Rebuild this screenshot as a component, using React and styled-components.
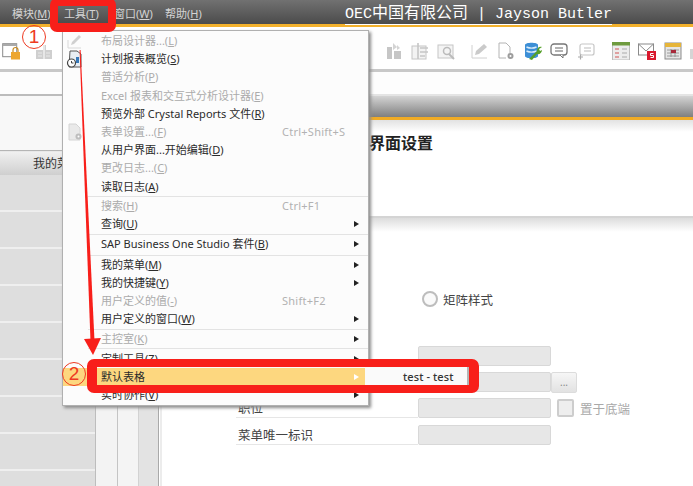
import React from "react";
import styled, { createGlobalStyle } from "styled-components";

const Global = createGlobalStyle`
  html, body { margin: 0; padding: 0; background: #fff; }
  * { box-sizing: border-box; }
`;
const sans = `"Noto Sans", "Noto Sans CJK SC", sans-serif`;

const Page = styled.div`
  position: relative; width: 693px; height: 486px; overflow: hidden; background: #fff;
  font-family: ${sans}; display: flex; flex-direction: column;
`;
const TitleBar = styled.header`
  height: 27px; flex: none; display: flex; align-items: center; gap: 13px;
  padding: 3px 81px 0 12px; border-bottom: 3px solid #f3b12c;
  background: linear-gradient(#717171, #4b4b4b);
`;
const TopMenu = styled.span`
  font-size: 11px; line-height: 14px; color: #d4d4d4; width: ${p => p.$w}px; white-space: nowrap;
  u { text-underline-offset: 1px; }
`;
const Company = styled.div`
  margin-left: auto; font-family: "Liberation Mono", "Noto Sans CJK SC", monospace; font-size: 15px; color: #fff;
  line-height: 19px; white-space: nowrap; border-bottom: 1px solid #fff;
  b { font-weight: 400; font-family: "Noto Sans CJK SC", sans-serif; font-size: 16px; line-height: 19px; }
`;
const Toolbar = styled.div`
  height: 45px; flex: none; display: flex; align-items: center; padding: 5px 0 0 2px;
  border-bottom: 3px solid #c8c8c8; overflow: hidden; background: #fff;
`;
const ToolGroup = styled.div`
  display: flex; flex: none; align-items: center; gap: ${p => p.$gap}px; margin-left: ${p => p.$ml || 0}px;
  svg { display: block; flex: none; }
`;
const SubBar = styled.div` height: 22px; flex: none; background: #fdfdfd; `;
const Work = styled.div` flex: 1; min-height: 0; display: flex; `;
const LeftPane = styled.aside`
  width: 160px; flex: none; display: flex; flex-direction: column; border-top: 2px solid #bcbcbc;
`;
const LeftTop = styled.div` height: 55px; flex: none; background: #f8f8f8; border-bottom: 1px solid #b5b5b5; `;
const Tab = styled.div`
  height: 24px; flex: none; width: 160px; padding: 2px 0 0 33px; font-size: 12px; line-height: 20px; color: #333;
  background: linear-gradient(#f0f0f0, #cfcfcf); border-top: 1px solid #e8e8e8;
`;
const LeftBody = styled.div` flex: 1; display: flex; min-height: 0; `;
const Rows = styled.div` width: 96px; flex: none; background: #dedede; border-right: 1px solid #bdbdbd; `;
const Row = styled.div` height: 37px; border-bottom: 2px solid #efefef; `;
const Col = styled.div`
  width: ${p => p.$w}px; flex: none; background: ${p => p.$bg}; border-right: 1px solid ${p => p.$line};
`;
const RightPane = styled.main` flex: 1; min-width: 0; display: flex; flex-direction: column; border-left: 2px solid #ececec; `;
const Band = styled.div`
  height: 26px; flex: none; background: linear-gradient(#d4d4d4, #7f7f7f); border-top: 2px solid #e4e4e4;
  border-bottom: 3px solid #f0ab25;
`;
const FormTitle = styled.div`
  height: 98px; flex: none; padding: 14px 0 0 207px; font-size: 16px; font-weight: 700; line-height: 18px; color: #222;
  background: linear-gradient(#e2e2e2, #fff 12px); border-bottom: 2px solid #d4d4d4;
`;
const FormBody = styled.div`
  flex: 1; padding-top: 71px; background: linear-gradient(#dcdcdc, #fff 14px);
`;
const RadioLine = styled.div`
  display: flex; align-items: center; gap: 5px; padding-left: 260px; height: 20px;
  font-size: 12.5px; color: #444;
`;
const Radio = styled.span`
  width: 16px; height: 16px; border-radius: 50%; border: 2px solid #bdbdbd; background: #fafafa;
`;
const FormGrid = styled.div`
  display: grid; grid-template-columns: 182px 133px auto; grid-auto-rows: 20px; row-gap: 6.2px;
  margin: 37px 0 0 74px; align-items: stretch;
`;
const Label = styled.div`
  font-size: 12.5px; line-height: 20px; color: #444; padding: 1px 0 0 2px; height: 20px; white-space: nowrap;
  ${p => p.$line && "border-bottom: 1px solid #e6e6e6;"}
`;
const Input = styled.div` background: #e7e7e7; border: 1px solid #d8d8d8; border-radius: 2px; `;
const Addon = styled.div` display: flex; align-items: center; gap: 6px; font-size: 12.5px; color: #a9a9a9; padding-left: ${p => p.$pl || 0}px; `;
const DotButton = styled.div`
  width: 26px; height: 21px; display: flex; align-items: center; justify-content: center; font-size: 10px; color: #888;
  background: linear-gradient(#f6f6f6, #e2e2e2); border: 1px solid #dcdcdc; border-radius: 2px;
`;
const Check = styled.span` width: 17px; height: 18px; background: #eee; border: 2px solid #cdcdcd; border-radius: 2px; `;

const Menu = styled.nav`
  position: absolute; left: 62px; top: 30px; width: 307px; height: 376px; padding-top: 1px;
  background: #fcfcfc; border: 1px solid #b0b0b0; box-shadow: 2px 2px 3px #8c8c8c;
`;
const Item = styled.div`
  position: relative; height: 18.2px; display: grid; grid-template-columns: 181px 1fr 6px; align-items: center;
  padding: 0 8px 0 38px; font-size: 11px; line-height: 18px; white-space: nowrap;
  color: ${p => (p.$off ? "#ababab" : "#2b2b2b")};
  background: ${p => (p.$hot ? "#fdd77f" : "transparent")};
  u { text-underline-offset: 1px; }
`;
const Shortcut = styled.span` color: #b2b2b2; letter-spacing: .25px; `;
const Caret = styled.i`
  grid-column: 3; width: 0; height: 0; border-left: 5px solid ${p => (p.$hot ? "#fff" : "#222")};
  border-top: 3.5px solid transparent; border-bottom: 3.5px solid transparent;
`;
const Sep = styled.div`
  height: 1px; margin: ${p => (p.$wide ? "1.25px" : ".25px")} 0 .25px 25px; background: #e3e3e3;
`;
const MenuIcon = styled.span`
  position: absolute; left: 3px; top: 0; width: 18px; height: 18px;
  svg { display: block; }
`;
const RedFrame = styled.div`
  position: absolute; border-style: solid; border-color: #f81f1a; border-radius: 7px;
  left: ${p => p.$l}px; top: ${p => p.$t}px; width: ${p => p.$w}px; height: ${p => p.$h}px;
  border-width: ${p => p.$bw};
`;
const Sub = styled.div`
  position: absolute; left: 365px; top: 367px; width: 104px; height: 18px; background: #fafafa; border-right: 2px solid #b5b5b5;
  padding-left: 38px; font-size: 11px; line-height: 19px; letter-spacing: .1px; font-weight: 500; color: #333;
`;
const Badge = styled.span`
  position: absolute; left: ${p => p.$l}px; top: ${p => p.$t}px; width: 24px; height: 24px; border-radius: 50%;
  border: 1px solid #ee3a22; color: #ee3a22; font: 400 19px/22px "Liberation Sans", sans-serif; text-align: center;
`;
const Overlay = styled.svg` position: absolute; left: 0; top: 0; pointer-events: none; `;

const Ic = ({ children }) => <svg width="18" height="18" viewBox="0 0 18 18" fill="none">{children}</svg>;
const G = "#c6c6c6";
const LockWin = () => <Ic><rect x=".7" y="1.7" width="14" height="13" stroke="#8a8a8a" fill="#fff" /><rect x="1" y="2" width="13.5" height="2" fill="#aaa" /><rect x="9" y="10" width="9" height="7.5" fill="#eda62f" /><path d="M11 10V8a2.5 2.5 0 015 0v2" stroke="#c98a1e" strokeWidth="1.2" /></Ic>;
const Building = () => <Ic><path d="M1 8h7V3h3v5h6v9H1z" fill="#cfcfcf" /><path d="M9 3v14" stroke="#fff" /><path d="M3 11h4M3 14h4M11 11h4M11 14h4" stroke="#e9e9e9" /></Ic>;
const GrayA = () => <Ic><path d="M2 5h5v12H2zM9 9h7v8H9z" fill={G} /><path d="M8 1l4 4-4 3zM12 3l3 3-3 2z" fill="#d4d4d4" /></Ic>;
const GrayB = () => <Ic><rect x="1" y="4" width="14" height="13" stroke={G} fill="#f3f3f3" /><path d="M7 1v16M9 6h8M9 10h8M9 14h5" stroke={G} strokeWidth="1.6" /></Ic>;
const GrayC = () => <Ic><rect x="1" y="3" width="15" height="13" stroke={G} fill="#f4f4f4" /><circle cx="10" cy="9" r="3.5" stroke="#bbb" strokeWidth="1.5" /><path d="M12 12l5 5" stroke="#bbb" strokeWidth="2" /></Ic>;
const Pencil = () => <Ic><path d="M1 16h15M1 3v13" stroke="#d0d0d0" /><path d="M4 13l1-4 8-7 3 3-8 7z" fill="#cacaca" /></Ic>;
const DocGear = () => <Ic><path d="M2 1h7l4 4v6M2 1v15h7" stroke="#b4b4b4" fill="#fff" /><circle cx="13.5" cy="14" r="3" fill="#9d9d9d" /><circle cx="13.5" cy="14" r="1" fill="#fff" /></Ic>;
const DbWrench = () => <Ic><path d="M1 3c0-3 13-3 13 0v11c0 3-13 3-13 0z" fill="#3d8fd6" /><path d="M2.5 5c3 1.4 7 1.4 10 0M2.5 9c3 1.4 7 1.4 10 0" stroke="#d9ecfa" strokeWidth="1.4" /><path d="M5 17l8-8c0-3 2-5 5-4l-3 2 1 2 2-1c0 3-3 5-5 4l-5 6z" fill="#56a02a" /></Ic>;
const Chat = () => <Ic><rect x="1" y="2" width="16" height="11" rx="3" stroke="#777" strokeWidth="1.3" fill="#fff" /><path d="M5 6h8M5 9h8" stroke="#666" /><path d="M10 13l3 3v-3" fill="#fff" stroke="#777" /></Ic>;
const ChatPlus = () => <Ic><rect x="3" y="2" width="14" height="11" rx="2" stroke="#c6c6c6" strokeWidth="1.2" /><path d="M7 6h7M7 9h7" stroke="#bbb" /><path d="M1 15h5M3.5 12.5v5" stroke="#aaa" strokeWidth="1.2" /></Ic>;
const CalGreen = () => <Ic><rect x=".5" y="1" width="17" height="17" fill="#ececec" stroke="#bdbdbd" /><rect y="0" width="18" height="3.5" fill="#6f9b3f" /><path d="M3 7h4M3 11h4M3 15h4" stroke="#d25555" /><path d="M10 7h5M10 11h5M10 15h5" stroke="#aaa" /></Ic>;
const MailS = () => <Ic><rect x=".5" y="2" width="15" height="11" fill="#fff" stroke="#8a8a8a" /><path d="M.5 2L8 9l7.5-7" stroke="#8a8a8a" /><rect x="9" y="9" width="9" height="9" fill="#d9182d" /><path d="M15.5 11.5h-3v2h3v2h-3" stroke="#fff" /></Ic>;
const CalYellow = () => <Ic><rect x="1" y="1" width="16" height="16" fill="#e6e6e6" stroke="#8b8b8b" /><rect x="1" y="1" width="16" height="4" fill="#e6b53a" /><path d="M3 8h12M3 11h12M3 14h12M7 7v8M11 7v8" stroke="#888" strokeWidth=".8" /><rect x="7" y="8" width="5" height="3" fill="#a8283a" /></Ic>;
const Faint = () => <Ic><rect x="0" y="7" width="5" height="10" fill="#d5d5d5" /></Ic>;
const MenuPencil = () => <Ic><path d="M2 16h13M2 8v8" stroke="#d8d8d8" /><path d="M5 13l1-3 7-7 2 2-7 7z" fill="#d0d0d0" /></Ic>;
const MenuClock = () => <Ic><path d="M4 1h7l4 3v13H3z" fill="#e8eef4" stroke="#555" /><path d="M10 7h3v6h-3z" fill="#3778b8" /><circle cx="5.5" cy="13" r="4" fill="#fff" stroke="#444" strokeWidth="1.2" /><path d="M5.5 11v2h2" stroke="#444" /></Ic>;
const MenuDoc = () => <Ic><path d="M3 1h7l4 4v12H3z" fill="#e9e9e9" stroke="#d4d4d4" /><circle cx="12.5" cy="13.5" r="3" fill="#bdbdbd" /><circle cx="12.5" cy="13.5" r="1" fill="#fff" /></Ic>;

const K = ({ t, k }) => <>{t}(<u>{k}</u>)</>;

const entries = [
  { t: "布局设计器...", k: "L", off: 1, icon: <MenuPencil /> },
  { t: "计划报表概览", k: "S", icon: <MenuClock /> },
  { t: "普适分析", k: "P", off: 1 },
  { t: "Excel 报表和交互式分析设计器", k: "E", off: 1 },
  { t: "预览外部 Crystal Reports 文件", k: "R" },
  { t: "表单设置...", k: "F", off: 1, sc: "Ctrl+Shift+S", icon: <MenuDoc /> },
  { t: "从用户界面...开始编辑", k: "D" },
  { t: "更改日志...", k: "C", off: 1 },
  { t: "读取日志", k: "A" },
  "sep",
  { t: "搜索", k: "H", off: 1, sc: "Ctrl+F1" },
  { t: "查询", k: "U", sub: 1 },
  "sep",
  { t: "SAP Business One Studio 套件", k: "B", sub: 1 },
  "wide",
  { t: "我的菜单", k: "M", sub: 1 },
  { t: "我的快捷键", k: "Y", sub: 1 },
  { t: "用户定义的值", k: "-", off: 1, sc: "Shift+F2" },
  { t: "用户定义的窗口", k: "W", sub: 1 },
  "sep",
  { t: "主控室", k: "K", off: 1, sub: 1 },
  "sep",
  { t: "定制工具", k: "Z", sub: 1 },
  { t: "默认表格", hot: 1, sub: 1 },
  { t: "实时协作", k: "V", sub: 1 },
];

export default function App() {
  return (
    <Page>
      <Global />
      <TitleBar>
        <TopMenu $w={39}><K t="模块" k="M" /></TopMenu>
        <TopMenu $w={37}><K t="工具" k="T" /></TopMenu>
        <TopMenu $w={38}><K t="窗口" k="W" /></TopMenu>
        <TopMenu $w={38}><K t="帮助" k="H" /></TopMenu>
        <Company>OEC<b>中国有限公司</b> | Jayson Butler</Company>
      </TitleBar>
      <Toolbar>
        <ToolGroup $gap={15}><LockWin /><Building /></ToolGroup>
        <ToolGroup $gap={8} $ml={306}><Faint /><GrayA /><GrayB /><GrayC /></ToolGroup>
        <ToolGroup $gap={8.4} $ml={16}><Pencil /><DocGear /><DbWrench /><Chat /><ChatPlus /></ToolGroup>
        <ToolGroup $gap={8.3} $ml={17}><CalGreen /><MailS /><CalYellow /><Faint /></ToolGroup>
      </Toolbar>
      <SubBar />
      <Work>
        <LeftPane>
          <LeftTop />
          <Tab>我的菜单</Tab>
          <LeftBody>
            <Rows>{Array.from({ length: 9 }, (_, i) => <Row key={i} />)}</Rows>
            <Col $w={22} $bg="#f3f3f3" $line="#c4c4c4" />
            <Col $w={21} $bg="#f4f4f4" $line="#d2d2d2" />
            <Col $w={20} $bg="#e3e3e3" $line="#a9a9a9" />
          </LeftBody>
        </LeftPane>
        <RightPane>
          <Band />
          <FormTitle>界面设置</FormTitle>
          <FormBody>
            <RadioLine><Radio />矩阵样式</RadioLine>
            <FormGrid>
              <Label />
              <Input />
              <Addon />
              <Label />
              <Input />
              <Addon><DotButton>...</DotButton></Addon>
              <Label $line>职位</Label>
              <Input />
              <Addon $pl={6}><Check />置于底端</Addon>
              <Label $line>菜单唯一标识</Label>
              <Input />
              <Addon />
            </FormGrid>
          </FormBody>
        </RightPane>
      </Work>

      <Menu>
        {entries.map((e, i) =>
          e === "sep" || e === "wide" ? <Sep key={i} $wide={e === "wide"} /> : (
            <Item key={i} $off={e.off} $hot={e.hot}>
              {e.icon && <MenuIcon>{e.icon}</MenuIcon>}
              <span>{e.k ? <K t={e.t} k={e.k} /> : e.t}</span>
              {e.sc && <Shortcut>{e.sc}</Shortcut>}
              {e.sub && <Caret $hot={e.hot} />}
            </Item>
          )
        )}
      </Menu>
      <Sub>test - test</Sub>
      <RedFrame $l={50} $t={-2} $w={66} $h={34} $bw="8px 8px 9px" />
      <RedFrame $l={87} $t={359} $w={392} $h={34} $bw="8px 10px" />
      <Badge $l={22} $t={25}>1</Badge>
      <Badge $l={62} $t={362}>2</Badge>
      <Overlay width="693" height="486" viewBox="0 0 693 486">
        <path d="M79.6 50L80.6 50L94.5 341L90.5 341Z" fill="#f81f1a" />
        <path d="M84 339L101 338L93 355Z" fill="#f81f1a" />
      </Overlay>
    </Page>
  );
}
